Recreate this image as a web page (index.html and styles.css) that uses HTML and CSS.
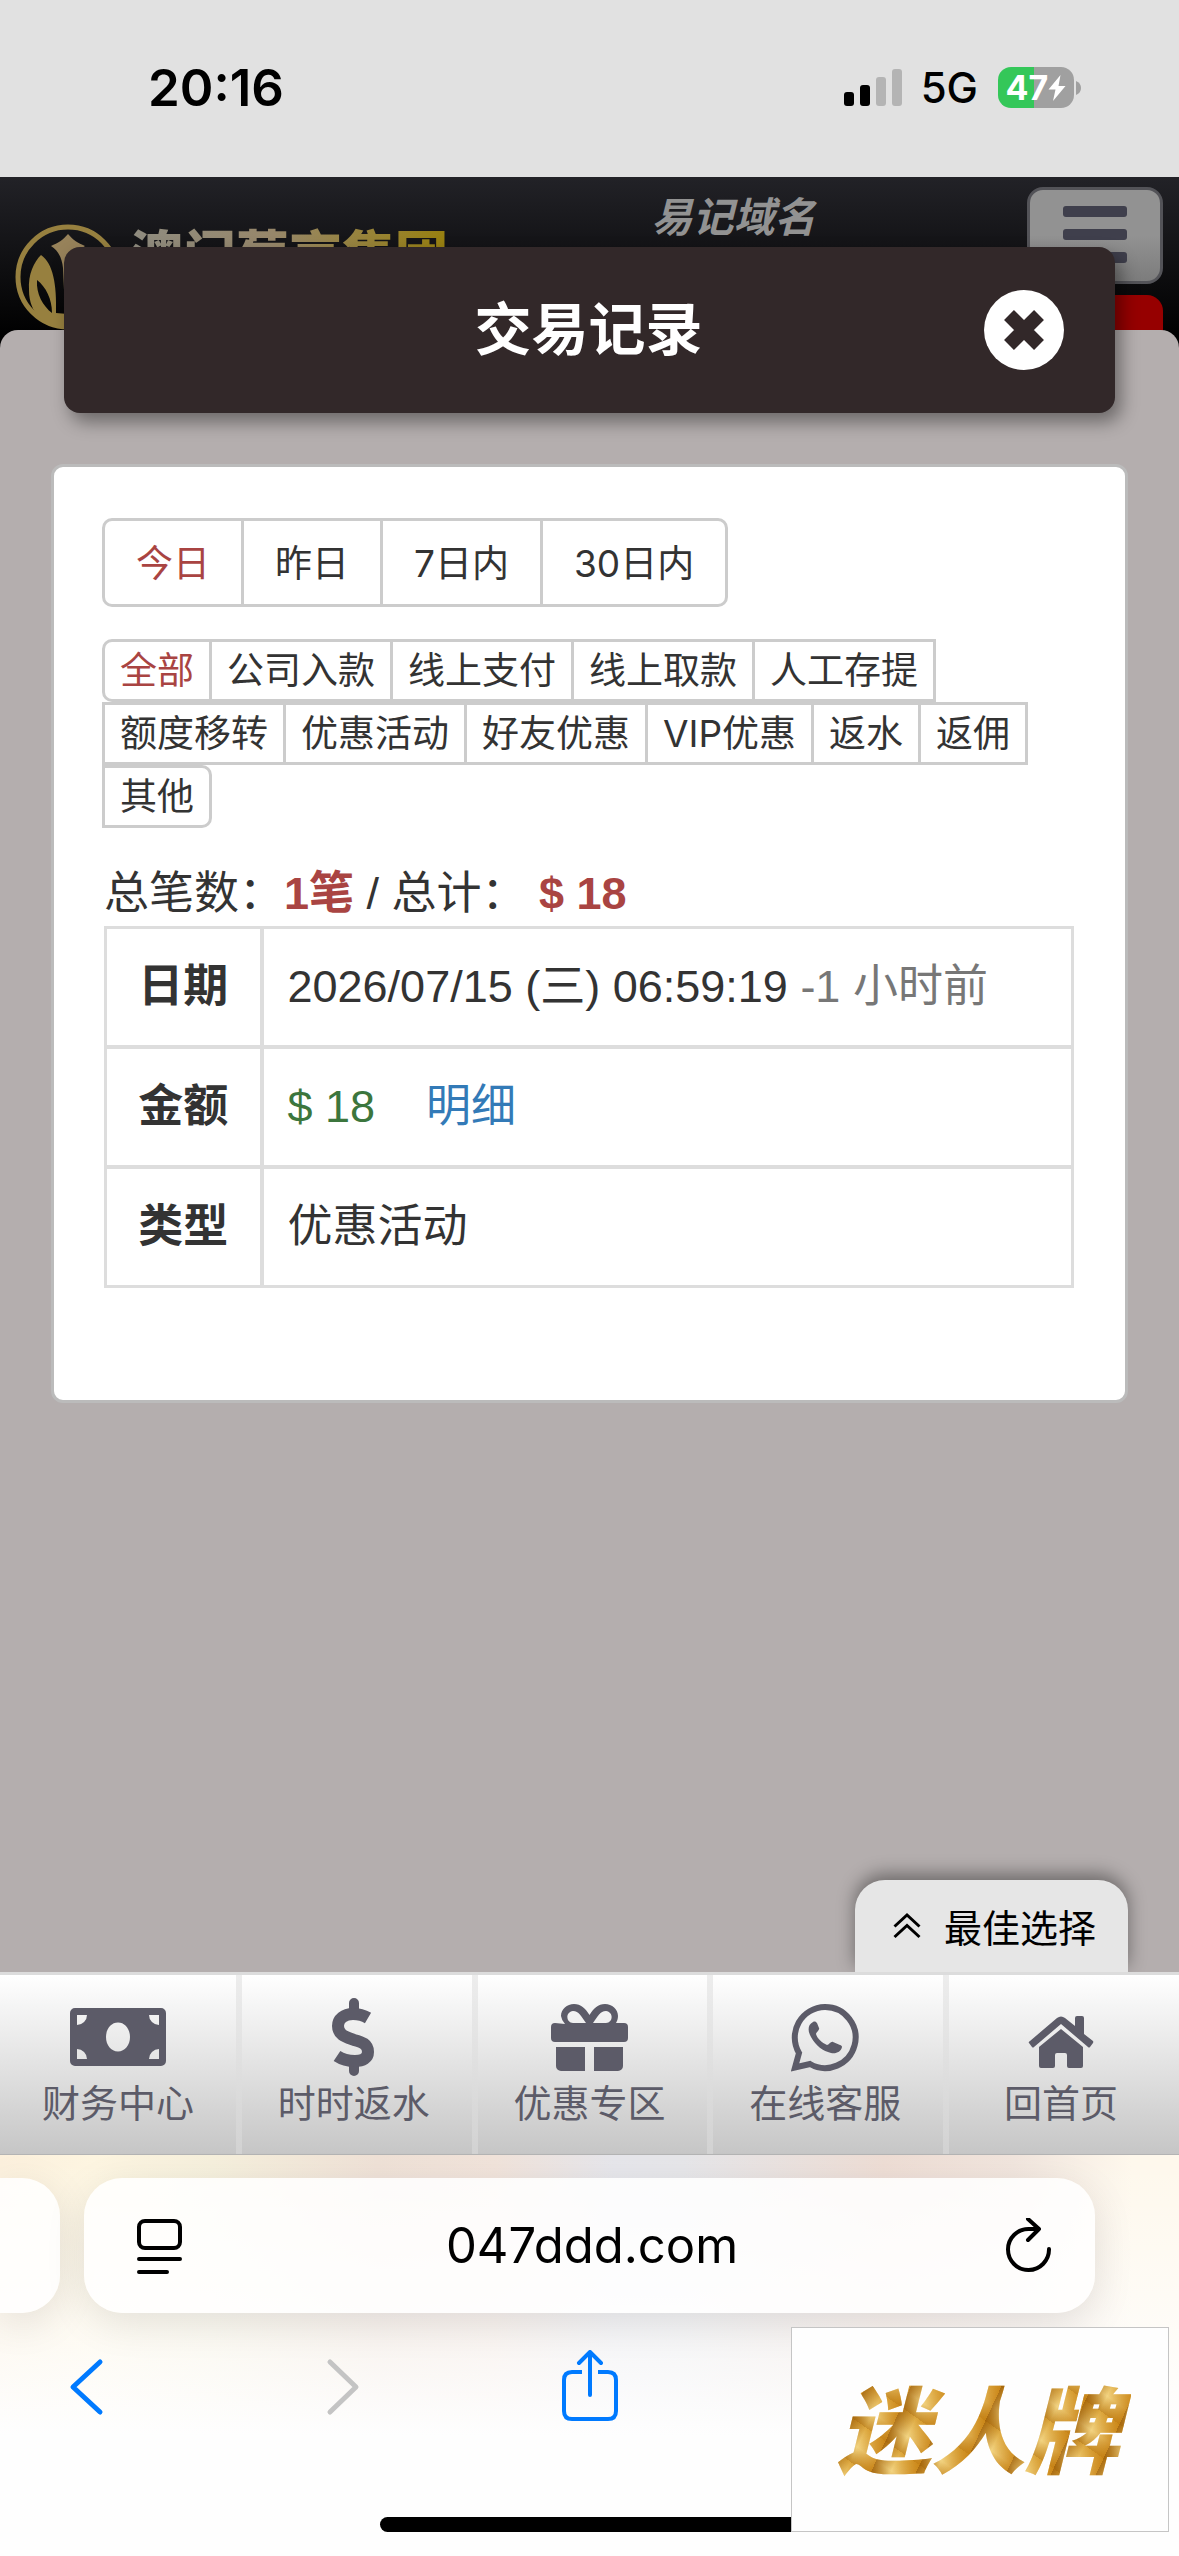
FILE: index.html
```html
<!DOCTYPE html>
<html lang="zh-CN">
<head>
<meta charset="utf-8">
<meta name="viewport" content="width=device-width, initial-scale=1">
<title>交易记录</title>
<link rel="stylesheet" href="styles.css">
</head>
<body>
<div class="status">
  <time class="status-time">20:16</time>
  <div class="status-right">
    <svg class="signal" viewBox="0 0 59 38" width="59" height="38" aria-hidden="true">
      <rect x="0" y="23" width="10" height="14" rx="3"/>
      <rect x="16" y="16" width="10" height="21" rx="3"/>
      <rect x="32" y="8" width="10" height="29" rx="3" fill="#b4b4b4"/>
      <rect x="48" y="0" width="10" height="37" rx="3" fill="#b4b4b4"/>
    </svg>
    <span class="network">5G</span>
    <span class="battery">
      <span class="battery-text">47</span>
      <svg viewBox="0 0 18 26" width="18" height="26" aria-hidden="true"><path d="M12.500 0 0.500 14.500h7L5 26 17.500 11h-7z" fill="#fff"/></svg>
    </span>
    <svg class="nub" viewBox="0 0 5 14" width="5" height="14" aria-hidden="true"><path d="M0 0q5 2 5 7t-5 7z" fill="#a0a0a0"/></svg>
  </div>
</div>

<header class="site">
  <a class="brand" href="#">
    <svg viewBox="0 0 106 106" width="106" height="106" aria-hidden="true">
      <defs>
        <linearGradient id="gold" x1="0" y1="0" x2="1" y2="0">
          <stop offset="0" stop-color="#97782c"/><stop offset=".5" stop-color="#978255"/><stop offset="1" stop-color="#8f8877"/>
        </linearGradient>
      </defs>
      <circle cx="53" cy="53" r="50" fill="none" stroke="#97803f" stroke-width="5"/>
      <path d="M53 10c5 6 10 9 17 12-7 4-11 12-12 22l-2 44h-6l-2-44c-1-10-5-18-12-22 7-3 12-6 17-12z" fill="#97825a"/>
      <path d="M26 31c12 8 16 30 15 58l12 1v14C30 104 14 90 14 66c-1-16 5-28 12-35zM22 56c-1 14 6 26 15 33 0-14-6-26-15-33z" fill="#97803f"/>
      <path d="M80 31c-12 8-16 30-15 58l-12 1v14c23 0 39-14 39-38 1-16-5-28-12-35z" fill="#97825a"/>
    </svg>
    <span class="brand-name">澳门葡京集团</span>
  </a>
  <a class="domain" href="#">易记域名</a>
  <div class="site-actions">
    <button class="menu" type="button" aria-label="菜单"><i></i><i></i><i></i></button>
    <button class="alert" type="button" aria-label="公告"></button>
  </div>
</header>

<main class="sheet">
  <div class="title-bar">
    <h1>交易记录</h1>
    <button class="close" type="button" aria-label="关闭">
      <svg viewBox="0 0 80 80" width="80" height="80" aria-hidden="true">
        <circle cx="40" cy="40" r="40" fill="#fff"/>
        <path d="M25 25 55 55M55 25 25 55" stroke="#322829" stroke-width="14"/>
      </svg>
    </button>
  </div>

  <section class="card">
    <div class="group dates">
      <button class="active" type="button">今日</button><button type="button">昨日</button><button type="button">7日内</button><button type="button">30日内</button>
    </div>
    <div class="group kinds">
      <button class="active" type="button">全部</button><button type="button">公司入款</button><button type="button">线上支付</button><button type="button">线上取款</button><button type="button">人工存提</button><button type="button">额度移转</button><button type="button">优惠活动</button><button type="button">好友优惠</button><button type="button">VIP优惠</button><button type="button">返水</button><button type="button">返佣</button><button type="button">其他</button>
    </div>
    <p class="summary">总笔数：<b>1笔</b> / 总计： <b>$ 18</b></p>
    <table class="record">
      <tr><th scope="row">日期</th><td>2026/07/15 (三) 06:59:19 <span class="ago">-1 小时前</span></td></tr>
      <tr><th scope="row">金额</th><td><span class="amount">$ 18</span><a class="detail" href="#">明细</a></td></tr>
      <tr><th scope="row">类型</th><td>优惠活动</td></tr>
    </table>
  </section>

  <button class="best" type="button">
    <svg viewBox="0 0 28 27" width="28" height="27" fill="none" stroke="#000" stroke-width="3" aria-hidden="true"><path d="M1.500 14.500 14 3l12.500 11.500M1.500 25 14 13.500 26.500 25"/></svg>
    最佳选择
  </button>
</main>

<nav class="tabs">
  <a href="#">
    <svg viewBox="0 0 96 78" width="96" height="78" aria-hidden="true"><path fill-rule="evenodd" d="M5 10h86a5 5 0 0 1 5 5v48a5 5 0 0 1-5 5H5a5 5 0 0 1-5-5V15a5 5 0 0 1 5-5zM7 17v10a10 10 0 0 0 10-10zM89 17v10a10 10 0 0 1-10-10zM7 61V51a10 10 0 0 1 10 10zM89 61V51a10 10 0 0 0-10 10zM48 24.500c-7 0-12 6.500-12 14.500s5 14.500 12 14.500 12-6.500 12-14.500-5-14.500-12-14.500z"/></svg>
    财务中心
  </a>
  <a href="#">
    <svg viewBox="0 0 48 78" width="48" height="78" aria-hidden="true"><g fill="none" stroke="#5c5b68"><path d="M24 5v10M24 63v10" stroke-width="10" stroke-linecap="round"/><path d="M38 20c-5-3-9-4-15-4-9 0-15 5-15 12 0 9 8 11 16 14 8 2 14 4 14 12 0 6-5 9-13 9-7 0-12-1-18-5" stroke-width="12"/></g></svg>
    时时返水
  </a>
  <a href="#">
    <svg viewBox="0 0 77 78" width="77" height="78" aria-hidden="true"><path fill-rule="evenodd" d="M14 26a14.500 14.500 0 0 1-4-8C10 11 16 6 23 6c7 0 11 4 15.500 11C43 10 47 6 54 6c7 0 13 5 13 12 0 3-1 5-2 7h8a4 4 0 0 1 4 4v11a4 4 0 0 1-4 4H4a4 4 0 0 1-4-4V29a4 4 0 0 1 4-4zM22 13c-8 1-7 12 0 12h13c-5-7-7-12-13-12zM55 13c-6 0-8 5-13 12h13c7 0 8-11 0-12zM5 49h29v24H10a5 5 0 0 1-5-5zM43 49h29v19a5 5 0 0 1-5 5H43z"/></svg>
    优惠专区
  </a>
  <a href="#">
    <svg viewBox="0 0 68 78" width="68" height="78" aria-hidden="true"><path d="M34 9a30.500 30.500 0 1 1-15 57L4 69.500 8 55A30.500 30.500 0 0 1 34 9z" fill="none" stroke="#5c5b68" stroke-width="6"/><path d="M22 24c-6 3-5 10-2 15 5 9 12 14 20 16 5 1 10-1 11-6 0-1-1-2-2-2l-7-3c-2-1-4 3-6 3-5-2-10-7-11-11 0-2 4-4 3-6l-2-5c-1-1-2-2-4-1z"/></svg>
    在线客服
  </a>
  <a href="#">
    <svg viewBox="0 0 66 78" width="66" height="78" aria-hidden="true"><path d="M2 43 29 20q4-3 8 0l10 8v-8a2 2 0 0 1 2-2h5a2 2 0 0 1 2 2v16l9 7a2 2 0 0 1 0 2l-3 4q-1 1-2 0L33 26 6 49q-1 1-2 0l-3-4q-1-1 1-2z"/><path d="M33 31 55 49v19a2 2 0 0 1-2 2H41a2 2 0 0 1-2-2V57a2 2 0 0 0-2-2h-8a2 2 0 0 0-2 2v11a2 2 0 0 1-2 2H13a2 2 0 0 1-2-2V49z"/></svg>
    回首页
  </a>
</nav>

<footer class="browser">
  <div class="address-row">
    <div class="prev-tab"></div>
    <div class="address">
      <button type="button" aria-label="页面菜单">
        <svg viewBox="0 0 46 56" width="46" height="56" fill="none" stroke="#000" stroke-width="4" stroke-linecap="round" aria-hidden="true"><rect x="3" y="3" width="41" height="27" rx="6"/><path d="M3 41h41M3 54h28"/></svg>
      </button>
      <a class="url" href="#">047ddd.com</a>
      <button type="button" aria-label="刷新">
        <svg viewBox="0 0 46 56" width="46" height="56" fill="none" stroke="#000" stroke-width="4" stroke-linecap="round" stroke-linejoin="round" aria-hidden="true"><path d="M43 31a20.500 20.500 0 1 1-20-20h10M22 1l11 10-11 11"/></svg>
      </button>
    </div>
  </div>
  <div class="tools">
    <button type="button" aria-label="后退"><svg viewBox="0 0 56 72" width="56" height="72" fill="none" stroke="#007aff" stroke-width="5" stroke-linecap="round" stroke-linejoin="round" aria-hidden="true"><path d="M42 12 15 37 42 62"/></svg></button>
    <button type="button" aria-label="前进" disabled><svg viewBox="0 0 56 72" width="56" height="72" fill="none" stroke="#c4c4c4" stroke-width="5" stroke-linecap="round" stroke-linejoin="round" aria-hidden="true"><path d="M20 12 46 37 20 62"/></svg></button>
    <button type="button" aria-label="分享"><svg viewBox="0 0 56 72" width="56" height="72" fill="none" stroke="#007aff" stroke-width="4" stroke-linecap="round" stroke-linejoin="round" aria-hidden="true"><path d="M28 2v43M17 13 28 2l11 11"/><path d="M20 22h-10q-8 0-8 8v31q0 8 8 8h36q8 0 8-8V30q0-8-8-8H36" stroke-linecap="butt"/></svg></button>
  </div>
  <div class="home"></div>
  <a class="ad" href="#"><span>迷人牌</span></a>
</footer>
</body>
</html>
```
FILE: styles.css
```css
* { box-sizing: border-box; }

body {
  margin: 0;
  min-height: 100vh;
  display: flex;
  flex-direction: column;
  background: #b4aeae;
  color: #333;
  font-family: "Inter", "Noto Sans CJK SC", sans-serif;
  font-size: 37px;
}

button {
  margin: 0;
  padding: 0;
  border: 0;
  background: none;
  color: inherit;
  font: inherit;
}

a { color: inherit; text-decoration: none; }
svg { display: block; flex: none; }

/* status bar */
.status {
  height: 177px;
  padding: 0 98px 2px 148px;
  display: flex;
  align-items: center;
  justify-content: space-between;
  background: #e1e1e1;
  color: #000;
}
.status-time { font-size: 51px; font-weight: 600; }
.status-right { display: flex; align-items: center; }
.network { margin: 0 20px 0 18px; font-size: 42px; font-weight: 500; }
.battery {
  width: 76px;
  height: 41px;
  border-radius: 13px;
  display: flex;
  align-items: center;
  justify-content: center;
  background: linear-gradient(90deg, #34c759 47%, #a0a0a0 47%);
  color: #fff;
}
.battery-text { font-size: 34px; font-weight: 700; line-height: 41px; }
.nub { margin-left: 2px; }

/* dimmed site header behind the sheet */
.site {
  height: 173px;
  padding: 10px 16px 0 15px;
  display: flex;
  align-items: flex-start;
  overflow: hidden;
  background: linear-gradient(#222227, #000 160px);
}
.brand {
  margin-top: 37px;
  display: flex;
  gap: 9px;
}
.brand-name {
  font-size: 53px;
  font-weight: 900;
  line-height: 64px;
  color: transparent;
  background: linear-gradient(90deg, #8f8c80, #97876a 45%, #98800f);
  -webkit-background-clip: text;
  background-clip: text;
}
.domain {
  margin: 0 auto;
  padding-right: 8px;
  font-size: 41px;
  font-weight: 700;
  font-style: italic;
  line-height: 60px;
  color: #929292;
}
.site-actions {
  width: 136px;
  display: flex;
  flex-direction: column;
  gap: 11px;
}
.menu {
  height: 97px;
  padding: 16px 33px;
  border: 3px solid #535358;
  border-radius: 16px;
  display: flex;
  flex-direction: column;
  gap: 12px;
  background: linear-gradient(#929292 50%, #7c7c7c);
}
.menu i { width: 64px; height: 11px; border-radius: 3px; background: #3f3f4c; }
.alert { height: 80px; border-radius: 16px; background: #960000; }

/* sheet */
.sheet {
  flex: 1;
  margin-top: -20px;
  padding: 0 51px;
  border-radius: 18px 18px 0 0;
  display: flex;
  flex-direction: column;
  background: #b4aeae;
}
.title-bar {
  margin: -83px 13px 51px;
  padding: 0 51px 0 49px;
  min-height: 166px;
  border-radius: 16px;
  display: grid;
  grid-template-columns: 80px 1fr 80px;
  align-items: center;
  background: #322829;
  box-shadow: 6px 9px 18px rgba(0, 0, 0, .4);
  color: #fff;
}
.title-bar h1 {
  grid-column: 2;
  margin: 0;
  font-size: 57px;
  font-weight: 600;
  line-height: 80px;
  text-align: center;
}

.card {
  padding: 51px 51px 112px 48px;
  border: 3px solid #bbb;
  border-radius: 12px;
  background: #fff;
}

.group { display: flex; flex-wrap: wrap; line-height: 57px; }
.group button {
  margin-right: -3px;
  padding: 0 15px;
  border: 3px solid #ccc;
  background: #fff;
}
.group button:first-child { border-radius: 10px 0 0 10px; }
.group button:last-child { border-radius: 0 10px 10px 0; }
.group .active { color: #a94442; }
.dates { margin-bottom: 32px; }
.dates button { padding: 14px 31px 12px; }

.summary,
.record {
  font-family: "Liberation Sans", "Noto Sans CJK SC", sans-serif;
  font-size: 45px;
  line-height: 64px;
}
.summary { margin: 34px 0 0 2px; }
.summary b { color: #a94442; }
.record {
  width: calc(100% - 2px);
  margin-left: 2px;
  border-collapse: collapse;
}
.record th,
.record td { padding: 26px 24px; border: 3px solid #ddd; text-align: left; }
.record tr + tr > * { border-top-width: 4px; }
.record th { width: 156px; padding: 26px 0; border-right-width: 4px; text-align: center; }
.ago { color: #777; }
.amount { color: #3c763d; }
.detail { margin-left: 51px; color: #337ab7; }

.best {
  align-self: flex-end;
  margin-top: auto;
  height: 92px;
  padding: 0 32px 2px 38px;
  border-radius: 30px 30px 0 0;
  display: flex;
  align-items: center;
  gap: 23px;
  background: #e6e6e6;
  box-shadow: 0 -6px 18px rgba(0, 0, 0, .4);
  color: #000;
  font-size: 38px;
}

/* site tab bar */
.tabs {
  position: relative;
  height: 183px;
  border-top: 3px solid #dcdcdc;
  border-bottom: 1px solid #b4b4b4;
  display: grid;
  grid-template-columns: repeat(5, 1fr);
  background: linear-gradient(#fff, #c6c6c6);
  color: #5c5b68;
  font-size: 38px;
}
.tabs a {
  padding-top: 23px;
  display: flex;
  flex-direction: column;
  align-items: center;
  line-height: 54px;
}
.tabs a + a { background: linear-gradient(#ededed, #d2d2d2) 0 0 / 6px 100% no-repeat; }
.tabs svg { fill: #5c5b68; }

/* browser toolbar */
.browser {
  position: relative;
  padding: 23px 0 24px;
  background:
    linear-gradient(rgba(255, 255, 255, 0), #fefefe 280px),
    linear-gradient(90deg, #fcf0dc, #fdf5e0 8%, #f6f0dc 18%, #efe1d6 32%, #f1e3da 42%, #e6e6eb 52%, #e6e6e9 58%, #eeddd4 75%, #f1e5dd 86%, #fef8ec 96%);
}
.address-row { display: flex; gap: 24px; }
.prev-tab,
.address {
  height: 135px;
  background: rgba(255, 255, 255, .85);
  box-shadow: 0 10px 40px rgba(0, 0, 0, .1);
}
.prev-tab { width: 60px; border-radius: 0 38px 38px 0; }
.address {
  flex: 1;
  margin-right: 84px;
  padding: 0 43px 0 52px;
  border-radius: 38px;
  display: flex;
  align-items: center;
  justify-content: space-between;
  color: #000;
}
.url { padding-right: 4px; font-size: 49px; }
.tools { margin: 37px 58px 95px; display: flex; gap: 196px; }
.home {
  width: 420px;
  height: 15px;
  margin: 0 auto;
  border-radius: 8px;
  background: #000;
}
.ad {
  position: absolute;
  right: 10px;
  bottom: 24px;
  width: 378px;
  height: 205px;
  border: 1px solid #c5c5c5;
  display: flex;
  align-items: center;
  justify-content: center;
  background: #fefefe;
}
.ad span {
  padding: 4px 12px 0 8px;
  font-size: 94px;
  font-weight: 900;
  font-style: italic;
  line-height: 120px;
  color: transparent;
  background:
    repeating-linear-gradient(115deg, rgba(160, 96, 8, .8), rgba(240, 200, 110, .3) 18px, rgba(200, 130, 20, .8) 41px),
    repeating-linear-gradient(35deg, #b87a14, #f4da8c 16px, #d59a2a 37px);
  -webkit-background-clip: text;
  background-clip: text;
}
```
